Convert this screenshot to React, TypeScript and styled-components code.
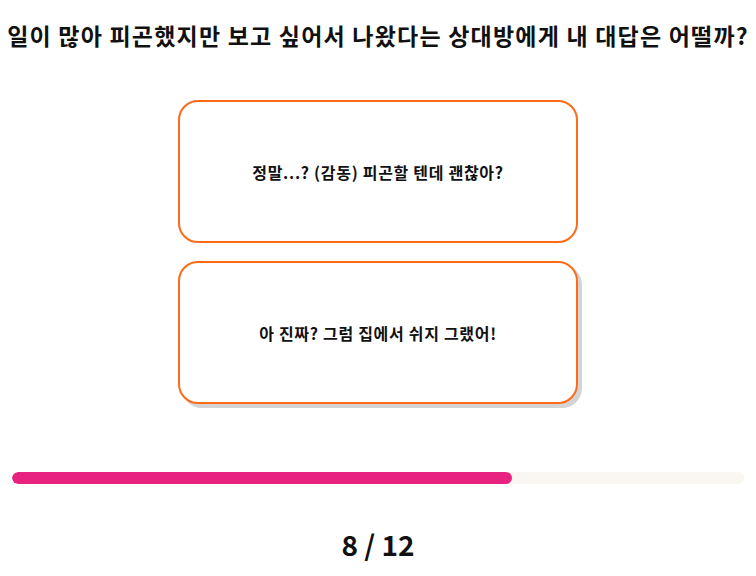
import styled, { createGlobalStyle } from "styled-components";

const GlobalStyle = createGlobalStyle`
  * {
    box-sizing: border-box;
  }

  body {
    margin: 0;
    background-color: #ffffff;
    font-family: "Noto Sans CJK KR", "Noto Sans", sans-serif;
    color: #111111;
  }
`;

const Page = styled.div`
  width: 756px;
  height: 576px;
  display: flex;
  flex-direction: column;
  align-items: center;
  overflow: hidden;
`;

const Question = styled.h1`
  margin: 20px 0 0;
  font-size: 23px;
  font-weight: 700;
  letter-spacing: 1.2px;
  white-space: nowrap;
  text-align: center;
  line-height: 30px;
`;

const Answers = styled.div`
  margin-top: 50px;
  display: flex;
  flex-direction: column;
  gap: 18px;
`;

const AnswerButton = styled.button<{ raised?: boolean }>`
  width: 400px;
  height: 143px;
  border: 2px solid #ff6a1a;
  border-radius: 20px;
  background-color: #ffffff;
  font-family: inherit;
  font-size: 16px;
  font-weight: 700;
  letter-spacing: 0.7px;
  color: #111111;
  cursor: pointer;
  box-shadow: ${({ raised }) => (raised ? "4px 4px 0 #d4d4d4" : "none")};
`;

const Track = styled.div`
  margin-top: 68px;
  width: 732px;
  height: 12px;
  border-radius: 6px;
  background-color: #faf6f1;
  overflow: hidden;
`;

const Fill = styled.div`
  height: 100%;
  border-radius: 6px;
  background-color: #e8237f;
`;

const Counter = styled.div`
  margin-top: 44px;
  font-size: 28px;
  font-weight: 700;
  line-height: 32px;
`;

const current = 8;
const total = 12;
const progress = 68.3;

export default function App() {
  return (
    <Page>
      <GlobalStyle />
      <Question>
        일이 많아 피곤했지만 보고 싶어서 나왔다는 상대방에게 내 대답은 어떨까?
      </Question>
      <Answers>
        <AnswerButton>정말...? (감동) 피곤할 텐데 괜찮아?</AnswerButton>
        <AnswerButton raised>아 진짜? 그럼 집에서 쉬지 그랬어!</AnswerButton>
      </Answers>
      <Track>
        <Fill style={{ width: `${progress}%` }} />
      </Track>
      <Counter>
        {current} / {total}
      </Counter>
    </Page>
  );
}
